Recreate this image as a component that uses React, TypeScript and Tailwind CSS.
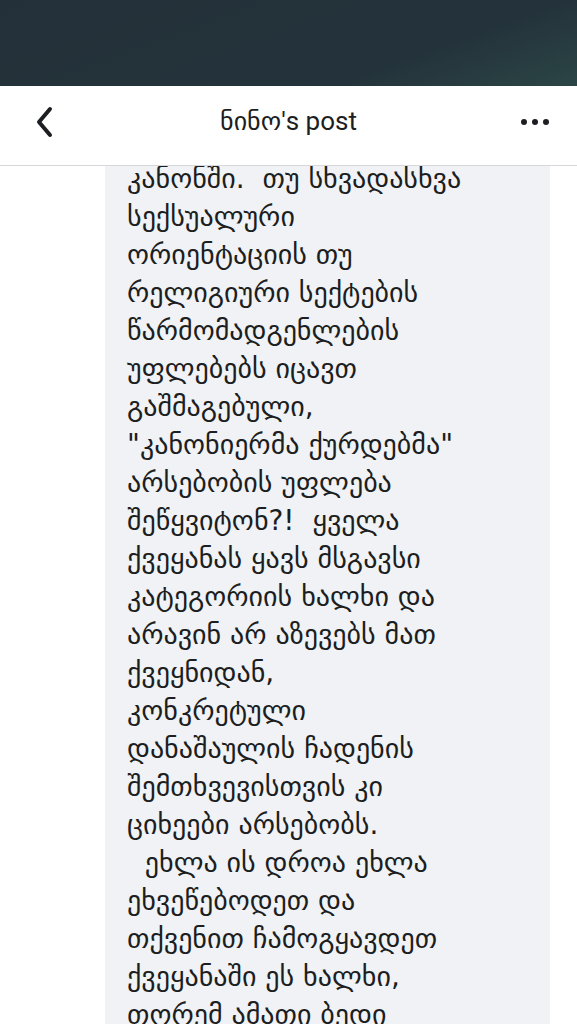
import React from "react";

const lines = [
  "კანონში.  თუ სხვადასხვა",
  "სექსუალური",
  "ორიენტაციის თუ",
  "რელიგიური სექტების",
  "წარმომადგენლების",
  "უფლებებს იცავთ",
  "გაშმაგებული,",
  "\"კანონიერმა ქურდებმა\"",
  "არსებობის უფლება",
  "შეწყვიტონ?!  ყველა",
  "ქვეყანას ყავს მსგავსი",
  "კატეგორიის ხალხი და",
  "არავინ არ აზევებს მათ",
  "ქვეყნიდან,",
  "კონკრეტული",
  "დანაშაულის ჩადენის",
  "შემთხვევისთვის კი",
  "ციხეები არსებობს.",
  "  ეხლა ის დროა ეხლა",
  "ეხვეწებოდეთ და",
  "თქვენით ჩამოგყავდეთ",
  "ქვეყანაში ეს ხალხი,",
  "თორემ ამათი ბედი",
];

export default function App() {
  return (
    <div className="w-[577px] h-[1024px] overflow-hidden bg-white flex flex-col font-['DejaVu_Sans',sans-serif]">
      {/* status bar */}
      <div className="h-[86px] shrink-0 bg-[linear-gradient(160deg,#233039_0%,#24333b_70%,#2b4545_100%)]" />

      {/* header */}
      <div className="h-[80px] shrink-0 flex items-center justify-between px-[30px] pb-[8px] border-b border-[#d6d8dc] bg-white relative z-10">
        <svg width="24" height="34" viewBox="0 0 24 34" className="ml-[2px]">
          <path d="M18 4 L7 17 L18 30" fill="none" stroke="#1c1e21" strokeWidth="4" strokeLinecap="round" strokeLinejoin="round" />
        </svg>
        <div className="text-[26px] text-[#1c1e21] font-['Roboto','DejaVu_Sans',sans-serif]">ნინო's post</div>
        <div className="flex gap-[5px] mr-[-2px]">
          <span className="w-[6px] h-[6px] rounded-full bg-[#1c1e21]" />
          <span className="w-[6px] h-[6px] rounded-full bg-[#1c1e21]" />
          <span className="w-[6px] h-[6px] rounded-full bg-[#1c1e21]" />
        </div>
      </div>

      {/* post body */}
      <div className="flex-1 overflow-hidden">
        <div className="ml-[105px] w-[445px] bg-[#f0f2f5] mt-[-6px] pl-[22px] pb-[40px]">
          {lines.map((l, i) => (
            <div key={i} className="h-[38px] whitespace-pre text-[28px] leading-[38px] text-[#1c1e21]">
              {l}
            </div>
          ))}
        </div>
      </div>
    </div>
  );
}
